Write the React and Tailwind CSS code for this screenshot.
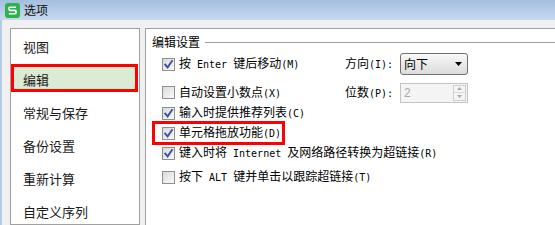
import React from "react";

const Txt = ({ s }) => {
  const parts = s.split(/([\x20-\x7e]+)/).filter(Boolean);
  return (
    <span className="whitespace-pre">
      {parts.map((p, i) =>
        /^[\x20-\x7e]+$/.test(p) ? (
          <span key={i} className="font-['DejaVu_Sans_Mono',monospace] text-[10px]">
            {p}
          </span>
        ) : (
          <span key={i}>{p}</span>
        )
      )}
    </span>
  );
};

const Check = ({ on }) => (
  <span className="relative w-[13px] h-[13px] shrink-0 border border-[#8e8f8f] bg-gradient-to-br from-[#dadada] to-[#fafafa] flex">
    {on && (
      <svg width="11" height="11" viewBox="0 0 11 11" className="absolute left-0 top-0">
        <path d="M2.2 5.6 L4.6 8.4 L9 2" fill="none" stroke="#3a54a4" strokeWidth="1.9" strokeLinecap="square" />
      </svg>
    )}
  </span>
);

const Row = ({ on, s, className = "", children }) => (
  <div className={"relative flex items-center " + className}>
    <div className="w-[183px] flex items-center gap-[4px] shrink-0">
      <Check on={on} />
      <Txt s={s} />
    </div>
    {children}
  </div>
);

const navItems = ["视图", "编辑", "常规与保存", "备份设置", "重新计算", "自定义序列"];

export default function App() {
  return (
    <div className="w-[555px] h-[225px] overflow-hidden bg-[#f0f0f0] flex flex-col font-['Noto_Sans_CJK_SC','Noto_Sans_CJK_JP',sans-serif] text-black">
      {/* title bar */}
      <div className="h-[20px] shrink-0 bg-gradient-to-b from-[#a4bfdf] to-[#c6daf0] flex items-center pl-[5px] gap-[4px]">
        <span className="w-[15px] h-[15px] rounded-[3px] bg-[#2fb14b] flex items-center justify-center">
          <svg width="11" height="11" viewBox="0 0 11 11">
            <path d="M9 2.2 H3.3 Q1.8 2.2 1.8 3.8 Q1.8 5.4 3.3 5.4 H7.7 Q9.2 5.4 9.2 7 Q9.2 8.7 7.7 8.7 H1.8" fill="none" stroke="#ffffff" strokeWidth="1.6" />
          </svg>
        </span>
        <span className="text-[12px] leading-[14px] text-[#111]">选项</span>
      </div>
      {/* body */}
      <div className="flex-1 flex border-l-2 border-[#b4cbe6] pt-[8px] pl-[8px] min-h-0">
        {/* left nav */}
        <div className="w-[130px] shrink-0 border border-[#a0a0a0] bg-white pt-[1px] text-[13px] leading-[16px] text-[#1a1a1a]">
          {navItems.map((t, i) =>
            i === 1 ? (
              <div key={t} className="h-[28px] mt-[1px] mb-[4px] mr-[1px] border-[3px] border-[#ff0000] bg-[#dcebd4] flex items-center pl-[9px] pt-[3px]">
                {t}
              </div>
            ) : (
              <div key={t} className="h-[33px] flex items-center pl-[12px]">
                {t}
              </div>
            )
          )}
        </div>
        {/* right panel */}
        <div className="flex-1 ml-[5px] border-l border-t border-[#a0a0a0] bg-white text-[12px] leading-[14px] flex flex-col">
          <div className="mt-[6px] h-[14px] flex items-center pl-[6px] gap-[5px]">
            <span>编辑设置</span>
            <span className="flex-1 h-px bg-[#a0a0a0]" />
          </div>
          <div className="pl-[16px] flex flex-col mt-[4px]">
            <Row on s="按 Enter 键后移动(M)" className="h-[22px]">
              <span className="w-[55px] shrink-0">
                <Txt s="方向(I):" />
              </span>
              <div className="w-[68px] h-[22px] rounded-[3px] border border-[#707070] bg-gradient-to-b from-[#f8f8f8] to-[#dcdcdc] flex items-center pl-[3px] pr-[5px] justify-between">
                <span>向下</span>
                <svg width="7" height="4" viewBox="0 0 7 4">
                  <path d="M0 0 H7 L3.5 4 Z" fill="#000" />
                </svg>
              </div>
            </Row>
            <Row on={false} s="自动设置小数点(X)" className="h-[21px] mt-[7px]">
              <span className="w-[55px] shrink-0">
                <Txt s="位数(P):" />
              </span>
              <div className="w-[68px] h-[20px] border border-[#c4c4c4] bg-[#f4f4f4] flex items-center pl-[3px] pr-[1px] justify-between text-[#a8a8a8]">
                <span className="font-['Liberation_Sans',sans-serif] text-[12px]">2</span>
                <div className="w-[13px] h-[16px] border border-[#d0d0d0] flex flex-col">
                  <div className="flex-1 flex items-center justify-center border-b border-[#d8d8d8]">
                    <svg width="5" height="3" viewBox="0 0 5 3"><path d="M0 3 H5 L2.5 0 Z" fill="#a8a8a8" /></svg>
                  </div>
                  <div className="flex-1 flex items-center justify-center">
                    <svg width="5" height="3" viewBox="0 0 5 3"><path d="M0 0 H5 L2.5 3 Z" fill="#a8a8a8" /></svg>
                  </div>
                </div>
              </div>
            </Row>
            <Row on s="输入时提供推荐列表(C)" className="h-[20px]" />
            <Row on s="单元格拖放功能(D)" className="h-[20px]">
              <span className="absolute left-[-10px] top-[-2px] w-[133px] h-[24px] border-[3px] border-[#ff0000]" />
            </Row>
            <div className="h-[20px] flex items-center gap-[4px]">
              <Check on />
              <Txt s="键入时将 Internet 及网络路径转换为超链接(R)" />
            </div>
            <div className="h-[20px] mt-[4px] flex items-center gap-[4px]">
              <Check on={false} />
              <Txt s="按下 ALT 键并单击以跟踪超链接(T)" />
            </div>
          </div>
        </div>
      </div>
    </div>
  );
}
